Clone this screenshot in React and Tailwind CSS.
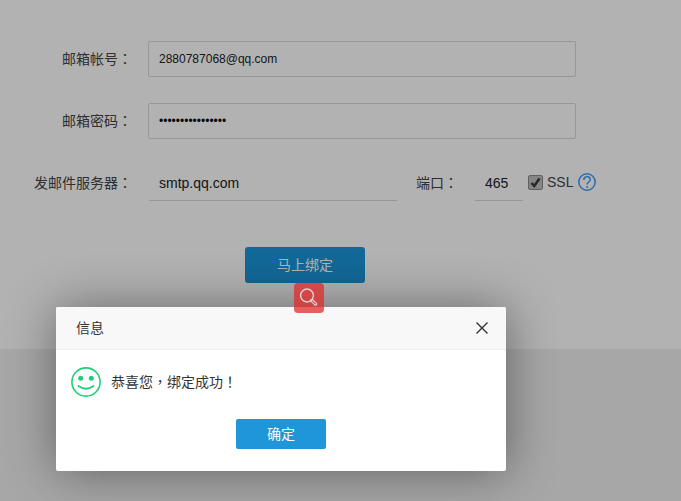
const P = ({ children }) => (
  <span className="font-['Noto_Sans_CJK_TC']">{children}</span>
);

export default function App() {
  const font = { fontFamily: '"Liberation Sans", "Noto Sans CJK SC", sans-serif' };
  return (
    <div style={font} className="relative h-[501px] w-[681px] overflow-hidden bg-[#f0f0f0] text-[14px]">
      <main className="flex h-[349px] flex-col gap-[26px] bg-white pt-[41px]">
        <div className="flex h-9 items-center">
          <label className="w-[132px] text-right text-[#444]">邮箱帐号<P>：</P></label>
          <input
            readOnly
            value="2880787068@qq.com"
            className="ml-[16px] h-9 w-[428px] rounded-[2px] border border-[#d8d8d8] px-[10px] text-[12px] text-[#222] outline-none"
          />
        </div>
        <div className="flex h-9 items-center">
          <label className="w-[132px] text-right text-[#444]">邮箱密码<P>：</P></label>
          <input
            readOnly
            type="password"
            value="1234567890123456"
            className="ml-[16px] h-9 w-[428px] rounded-[2px] border border-[#d8d8d8] px-[10px] text-[12px] text-[#111] outline-none"
          />
        </div>
        <div className="flex h-9 items-center">
          <label className="w-[132px] text-right text-[#444]">发邮件服务器<P>：</P></label>
          <input
            readOnly
            value="smtp.qq.com"
            className="ml-[17px] h-9 w-[248px] border-b border-[#d8d8d8] px-[10px] text-[14px] text-[#222] outline-none"
          />
          <label className="ml-[19px] w-[59px] text-[#444]">端口<P>：</P></label>
          <input
            readOnly
            value="465"
            className="h-9 w-[48px] border-b border-[#d8d8d8] px-[10px] text-[14px] text-[#222] outline-none"
          />
          <span className="mb-[1px] ml-[5px] flex h-[15px] w-[15px] items-center justify-center rounded-[2px] border border-[#8a8a8a] bg-[#c0c0c0]">
            <svg width="13" height="13" viewBox="0 0 13 13">
              <path d="M2.5 7 L5.2 10 L10.5 2.5" fill="none" stroke="#3a3a3a" strokeWidth="2.6" />
            </svg>
          </span>
          <span className="mb-[2px] ml-[4px] text-[#444]">SSL</span>
          <svg className="mb-[2px] ml-[5px]" width="18" height="18" viewBox="0 0 18 18">
            <circle cx="9" cy="9" r="8.2" fill="none" stroke="#3f9bf5" strokeWidth="1.5" />
            <path d="M5.8 6.9 C5.9 2.6 12.3 2.6 12.3 6.5 C12.3 9 9.1 9 9.1 11.6" fill="none" stroke="#3f9bf5" strokeWidth="1.5" />
            <circle cx="9.1" cy="14" r="1" fill="#3f9bf5" />
          </svg>
        </div>
        <div className="ml-[245px] mt-[20px] flex">
          <button className="h-9 w-[120px] rounded-[3px] bg-[#1a96d8] text-white">马上绑定</button>
        </div>
      </main>

      <div className="absolute inset-0 bg-black/30" />

      <section className="absolute left-[56px] top-[307px] h-[164px] w-[450px] rounded-[2px] bg-white shadow-[1px_1px_50px_rgba(0,0,0,0.42)]">
        <header className="flex h-[43px] items-center justify-between rounded-t-[2px] border-b border-[#eee] bg-[#f8f8f8] pl-[20px] pr-[18px] text-[#333]">
          <span>信息</span>
          <svg width="12" height="12" viewBox="0 0 12 12">
            <path d="M0.5 0.5 L11.5 11.5 M11.5 0.5 L0.5 11.5" stroke="#2f2f3a" strokeWidth="1.4" />
          </svg>
        </header>
        <div className="flex items-center pl-[15px] pt-[17px]">
          <svg width="30" height="30" viewBox="0 0 30 30">
            <circle cx="15" cy="15" r="14.1" fill="none" stroke="#1fcf77" strokeWidth="1.6" />
            <circle cx="9.7" cy="11.3" r="2.5" fill="#1fcf77" />
            <circle cx="20.3" cy="11.3" r="2.5" fill="#1fcf77" />
            <path d="M7.5 19 Q15 24.5 22.5 19" fill="none" stroke="#1fcf77" strokeWidth="1.8" strokeLinecap="round" />
          </svg>
          <span className="ml-[10px] text-[#333]">恭喜您<P>，</P>绑定成功<P>！</P></span>
        </div>
        <div className="mt-[22px] flex justify-center">
          <button className="h-[30px] w-[90px] rounded-[2px] bg-[#1e96d9] text-white">确定</button>
        </div>
      </section>

      <div className="absolute left-[294px] top-[283px] flex h-[30px] w-[30px] items-center justify-center rounded-[4px] bg-[#e02b2b]/75">
        <svg width="20" height="20" viewBox="0 0 20 20">
          <circle cx="8" cy="7.5" r="6.4" fill="none" stroke="#dcd0d0" strokeWidth="1.5" />
          <path d="M12.8 12.5 L16.6 16" stroke="#dcd0d0" strokeWidth="3.4" strokeLinecap="round" />
          <path d="M13.4 13.1 L16.4 15.8" stroke="#d85050" strokeWidth="1.2" strokeLinecap="round" />
        </svg>
      </div>
    </div>
  );
}
